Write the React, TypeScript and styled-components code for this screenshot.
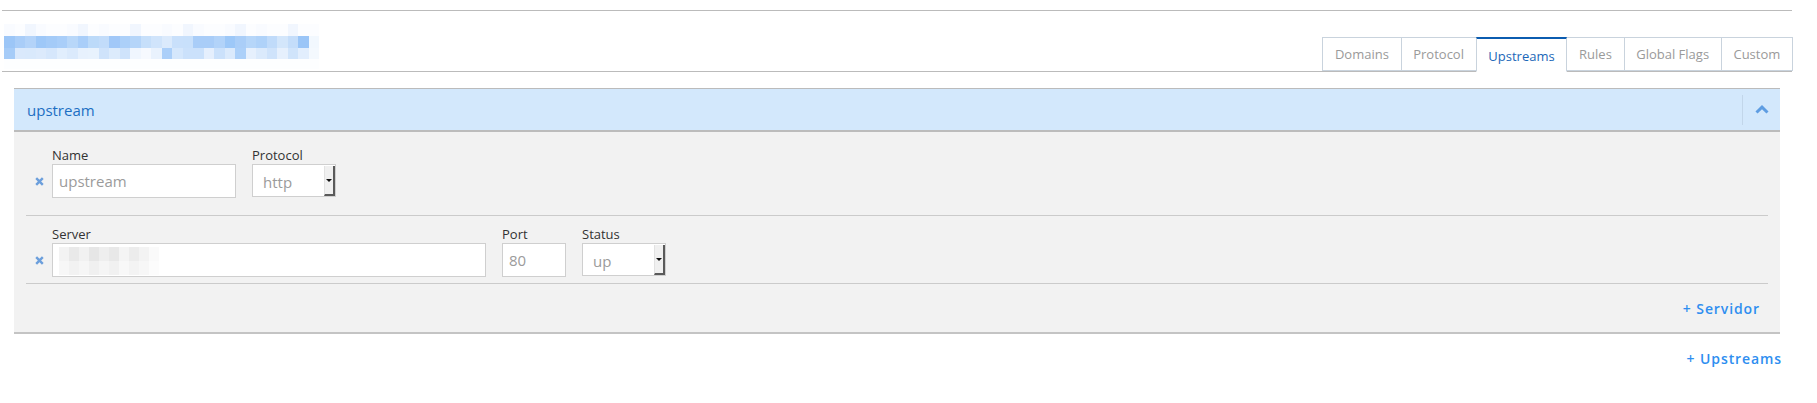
import React from "react";
import styled, { createGlobalStyle } from "styled-components";

const Global = createGlobalStyle`
  html, body { margin: 0; padding: 0; background: #fff; }
  body { font-family: "Open Sans", "Noto Sans", Arial, sans-serif; }
  * { box-sizing: border-box; }
`;

const Page = styled.div`
  width: 1817px;
  min-height: 403px;
  padding-top: 10px;
`;

const TopBar = styled.div`
  margin: 0 25px 0 2px;
  border-top: 1px solid #bbb;
`;

const TitleRow = styled.div`
  height: 61px;
  display: flex;
  align-items: flex-end;
  justify-content: space-between;
  border-bottom: 1px solid #bbb;
`;

const Mosaic = styled.div`
  align-self: flex-start;
  margin: 13px 0 0 2px;
  display: flex;
  flex-direction: column;
`;

const MosaicRow = styled.div<{ $h: number }>`
  display: flex;
  height: ${(p) => p.$h}px;
`;

const Cell = styled.span<{ $c: string }>`
  display: block;
  width: 10.5px;
  height: 100%;
  background: ${(p) => p.$c};
`;

const Tabs = styled.div`
  display: flex;
  margin-bottom: -1px;
  margin-right: -1px;
`;

const Tab = styled.div<{ $active?: boolean }>`
  height: ${(p) => (p.$active ? 35 : 34)}px;
  padding: 0 11.7px;
  display: flex;
  align-items: center;
  font-size: 13px;
  color: ${(p) => (p.$active ? "#1b67b8" : "#9a9a9a")};
  background: #fff;
  border: 1px solid #c9d3dd;
  border-top: ${(p) => (p.$active ? "2px solid #0b5cb0" : "1px solid #c9d3dd")};
  border-bottom: ${(p) => (p.$active ? "1px solid #fff" : "1px solid #c9d3dd")};
  margin-left: -1px;
  position: relative;
  z-index: ${(p) => (p.$active ? 1 : 0)};
  padding-top: ${(p) => (p.$active ? 1 : 0)}px;
`;

const Panel = styled.div`
  margin: 16px 37px 0 14px;
  border-top: 1px solid #bbb;
  border-bottom: 2px solid #c4c4c4;
  background: #f2f2f2;
`;

const PanelHeader = styled.div`
  height: 43px;
  display: flex;
  align-items: center;
  background: #d3e8fc;
  border-bottom: 2px solid #bcbcbc;
  padding-left: 13px;
`;

const HeaderTitle = styled.div`
  flex: 1;
  font-size: 15px;
  color: #1d6fc3;
`;

const HeaderDivider = styled.div`
  width: 1px;
  height: 30px;
  background: #c2d6ea;
`;

const Toggle = styled.div`
  width: 37px;
  display: flex;
  justify-content: center;
  align-items: center;
`;

const Body = styled.div`
  padding: 0 12px;
`;

const FieldRow = styled.div<{ $top: number; $bottom: number; $line?: boolean }>`
  display: flex;
  align-items: flex-end;
  padding: ${(p) => p.$top}px 0 ${(p) => p.$bottom}px;
  border-bottom: ${(p) => (p.$line ? "1px solid #cbcbcb" : "none")};
`;

const RemoveCell = styled.div`
  width: 26px;
  height: 33px;
  display: flex;
  align-items: center;
  justify-content: center;
`;

const Fields = styled.div`
  display: flex;
  gap: 16px;
`;

const Field = styled.div`
  display: flex;
  flex-direction: column;
`;

const Label = styled.label`
  font-size: 13px;
  line-height: 17px;
  color: #333;
`;

const TextBox = styled.div<{ $w: number }>`
  width: ${(p) => p.$w}px;
  height: 34px;
  background: #fff;
  border: 1px solid #cfcfcf;
  display: flex;
  align-items: center;
  padding-left: 6px;
  font-size: 15px;
  color: #9b9b9b;
`;

const SelectBox = styled.div<{ $w: number }>`
  width: ${(p) => p.$w}px;
  height: 33px;
  background: #fff;
  border: 1px solid #cfcfcf;
  display: flex;
  align-items: stretch;
  font-size: 15px;
  color: #9b9b9b;
`;

const SelectText = styled.div`
  flex: 1;
  display: flex;
  align-items: center;
  padding: 2px 0 0 10px;
`;

const SelectArrow = styled.div`
  width: 11px;
  background: #f0f0f0;
  border-right: 2px solid #5a5a5a;
  border-bottom: 2px solid #5a5a5a;
  border-left: 1px solid #e2e2e2;
  margin-top: 1px;
  display: flex;
  align-items: center;
  justify-content: center;
  &::after {
    content: "";
    border-left: 3px solid transparent;
    border-right: 3px solid transparent;
    border-top: 3px solid #111;
  }
`;

const Blur = styled.div`
  display: flex;
  flex-direction: column;
  margin-top: 2px;
`;

const Footer = styled.div`
  height: 48px;
  display: flex;
  align-items: center;
  justify-content: flex-end;
  padding-right: 8px;
`;

const AddLink = styled.a`
  font-size: 14px;
  font-weight: 600;
  letter-spacing: 0.9px;
  color: #2e8ef0;
  text-decoration: none;
  cursor: pointer;
`;

const BelowPanel = styled.div`
  display: flex;
  justify-content: flex-end;
  padding: 15px 35px 0 0;
`;

const row1 = ["#9cc6f7","#a9cdf8","#b3d3f9","#9ec8f8","#a4cbf8","#a9cef9","#b8d7f9","#a9cef9","#bcdaf9","#c2dcfa","#a1c8f8","#acd0f9","#b5d5f9","#c6dffa","#d0e4fb","#dbeafc","#c9e0fb","#c8e0fb","#a9cdf8","#a9cdf8","#b2d3f9","#9dc8f8","#aacef8","#b6d6f9","#afd2f9","#c0dbfa","#d3e6fb","#c4ddfa","#9ac5f7","#f2f8fe"];
const row2 = ["#a6ccf8","#dae9fc","#d9e9fc","#dceafc","#d6e7fc","#e1eefd","#dbeafc","#e7f1fd","#e8f2fd","#cfe3fb","#dcebfc","#cfe3fb","#f0f6fe","#f6f9fe","#e9f2fd","#abcff9","#d5e7fc","#cbe1fb","#cbe1fb","#e5effd","#cbe1fb","#dbeafc","#acd0f9","#e6f0fd","#dbeafc","#cfe3fb","#e6f0fd","#d0e4fb","#e2eefd","#f4f9fe"];
const row0 = row1.map((_, i) => (i % 5 === 2 ? "#f1f6fe" : i % 3 === 0 ? "#f9fbff" : "#fcfdff"));

const blurTop = ["#f3f3f3","#e9e9e9","#f1f1f1","#e6e6e6","#eeeeee","#e8e8e8","#f4f4f4","#ececec","#f3f3f3","#fafafa"];
const blurBot = ["#f7f7f7","#f2f2f2","#f6f6f6","#f0f0f0","#f5f5f5","#f1f1f1","#f8f8f8","#f3f3f3","#f7f7f7","#fcfcfc"];

const Remove = () => (
  <RemoveCell>
    <svg width="9" height="9" viewBox="0 0 9 9">
      <path d="M1.2 1.2 L7.8 7.8 M7.8 1.2 L1.2 7.8" stroke="#6c9fdc" strokeWidth="2.4" strokeLinecap="butt" />
    </svg>
  </RemoveCell>
);

const BlurCell = styled.span<{ $c: string }>`
  display: block;
  width: 10px;
  height: 14px;
  background: ${(p) => p.$c};
`;

export default function App() {
  return (
    <>
      <Global />
      <Page>
        <TopBar>
          <TitleRow>
            <Mosaic>
              <MosaicRow $h={12}>{row0.map((c, i) => <Cell key={i} $c={c} />)}</MosaicRow>
              <MosaicRow $h={12}>{row1.map((c, i) => <Cell key={i} $c={c} />)}</MosaicRow>
              <MosaicRow $h={11}>{row2.map((c, i) => <Cell key={i} $c={c} />)}</MosaicRow>
              <MosaicRow $h={10}>{row0.map((c, i) => <Cell key={i} $c="#fdfeff" />)}</MosaicRow>
            </Mosaic>
            <Tabs>
              <Tab>Domains</Tab>
              <Tab>Protocol</Tab>
              <Tab $active>Upstreams</Tab>
              <Tab>Rules</Tab>
              <Tab>Global Flags</Tab>
              <Tab>Custom</Tab>
            </Tabs>
          </TitleRow>
        </TopBar>

        <Panel>
          <PanelHeader>
            <HeaderTitle>upstream</HeaderTitle>
            <HeaderDivider />
            <Toggle>
              <svg width="14" height="9" viewBox="0 0 14 9">
                <path d="M1.5 7.5 L7 2.2 L12.5 7.5" fill="none" stroke="#5e9de2" strokeWidth="3" />
              </svg>
            </Toggle>
          </PanelHeader>
          <Body>
            <FieldRow $top={15} $bottom={17} $line>
              <Remove />
              <Fields>
                <Field>
                  <Label>Name</Label>
                  <TextBox $w={184}>upstream</TextBox>
                </Field>
                <Field>
                  <Label>Protocol</Label>
                  <SelectBox $w={84}>
                    <SelectText>http</SelectText>
                    <SelectArrow />
                  </SelectBox>
                </Field>
              </Fields>
            </FieldRow>
            <FieldRow $top={10} $bottom={6} $line>
              <Remove />
              <Fields>
                <Field>
                  <Label>Server</Label>
                  <TextBox $w={434}>
                    <Blur>
                      <MosaicRow $h={14}>{blurTop.map((c, i) => <BlurCell key={i} $c={c} />)}</MosaicRow>
                      <MosaicRow $h={14}>{blurBot.map((c, i) => <BlurCell key={i} $c={c} />)}</MosaicRow>
                    </Blur>
                  </TextBox>
                </Field>
                <Field>
                  <Label>Port</Label>
                  <TextBox $w={64}>80</TextBox>
                </Field>
                <Field>
                  <Label>Status</Label>
                  <SelectBox $w={84}>
                    <SelectText>up</SelectText>
                    <SelectArrow />
                  </SelectBox>
                </Field>
              </Fields>
            </FieldRow>
            <Footer>
              <AddLink>+ Servidor</AddLink>
            </Footer>
          </Body>
        </Panel>
        <BelowPanel>
          <AddLink>+ Upstreams</AddLink>
        </BelowPanel>
      </Page>
    </>
  );
}
